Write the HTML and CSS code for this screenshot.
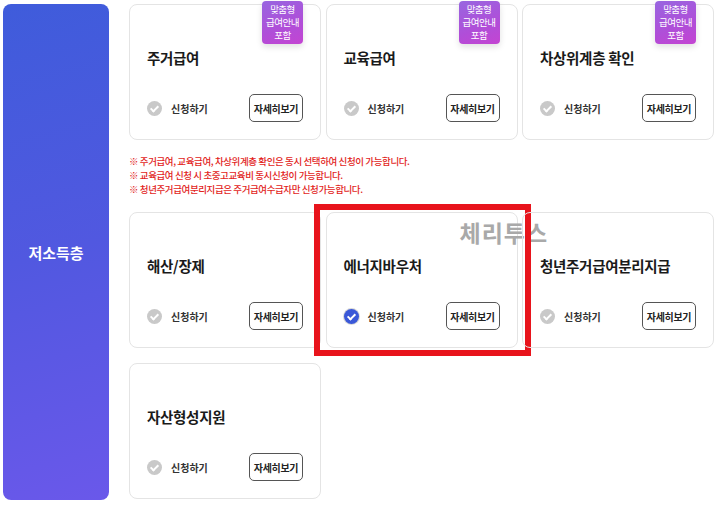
FILE: index.html
```html
<!DOCTYPE html>
<html>
<head>
    <title>저소득층 급여 신청</title>
    <link rel="stylesheet" href="styles.css">
</head>
<body>
    <div class="page">
        <div class="side">저소득층</div>
        <div class="main">
            <div class="card-grid">
                <div class="card">
                    <span class="badge">맞춤형<br>급여안내<br>포함</span>
                    <h3 class="card-title">주거급여</h3>
                    <div class="card-foot">
                        <label class="apply"><span class="check"></span>신청하기</label>
                        <button class="more">자세히보기</button>
                    </div>
                </div>
                <div class="card">
                    <span class="badge">맞춤형<br>급여안내<br>포함</span>
                    <h3 class="card-title">교육급여</h3>
                    <div class="card-foot">
                        <label class="apply"><span class="check"></span>신청하기</label>
                        <button class="more">자세히보기</button>
                    </div>
                </div>
                <div class="card">
                    <span class="badge">맞춤형<br>급여안내<br>포함</span>
                    <h3 class="card-title">차상위계층 확인</h3>
                    <div class="card-foot">
                        <label class="apply"><span class="check"></span>신청하기</label>
                        <button class="more">자세히보기</button>
                    </div>
                </div>
            </div>

            <div class="notes">
                <p>※ 주거급여, 교육급여, 차상위계층 확인은 동시 선택하여 신청이 가능합니다.</p>
                <p>※ 교육급여 신청 시 초중고교육비 동시신청이 가능합니다.</p>
                <p>※ 청년주거급여분리지급은 주거급여수급자만 신청가능합니다.</p>
            </div>

            <div class="card-grid">
                <div class="card">
                    <h3 class="card-title">해산/장제</h3>
                    <div class="card-foot">
                        <label class="apply"><span class="check"></span>신청하기</label>
                        <button class="more">자세히보기</button>
                    </div>
                </div>
                <div class="card">
                    <span class="watermark">체리투스</span>
                    <span class="highlight"></span>
                    <h3 class="card-title">에너지바우처</h3>
                    <div class="card-foot">
                        <label class="apply"><span class="check checked"></span>신청하기</label>
                        <button class="more">자세히보기</button>
                    </div>
                </div>
                <div class="card">
                    <h3 class="card-title">청년주거급여분리지급</h3>
                    <div class="card-foot">
                        <label class="apply"><span class="check"></span>신청하기</label>
                        <button class="more">자세히보기</button>
                    </div>
                </div>
                <div class="card">
                    <h3 class="card-title">자산형성지원</h3>
                    <div class="card-foot">
                        <label class="apply"><span class="check"></span>신청하기</label>
                        <button class="more">자세히보기</button>
                    </div>
                </div>
            </div>
        </div>
    </div>
</body>
</html>
```

FILE: styles.css
```css
body {
    margin: 0;
    font-family: "Noto Sans CJK KR", "Noto Sans", sans-serif;
    background-color: #ffffff;
    color: #222;
}

.page {
    display: flex;
    gap: 20px;
    padding: 4px 0 0 3px;
}

.side {
    width: 106px;
    height: 496px;
    border-radius: 8px;
    background: linear-gradient(165deg, #3f5cdb 0%, #5158e0 50%, #6a58ea 100%);
    color: #fff;
    font-size: 15px;
    font-weight: 700;
    display: flex;
    align-items: center;
    justify-content: center;
}

.main {
    width: 585px;
    display: flex;
    flex-direction: column;
}

.card-grid {
    display: grid;
    grid-template-columns: repeat(3, 1fr);
    column-gap: 4.5px;
    row-gap: 15px;
}

.card {
    position: relative;
    height: 136px;
    box-sizing: border-box;
    border: 1px solid #e4e4e4;
    border-radius: 8px;
    padding: 0 17px;
    display: flex;
    flex-direction: column;
}

.card-title {
    margin: 41px 0 0;
    font-size: 14.5px;
    font-weight: 700;
    line-height: 24px;
    color: #1a1a1a;
    letter-spacing: -0.3px;
}

.card-foot {
    margin-top: auto;
    margin-bottom: 17px;
    display: flex;
    align-items: center;
    justify-content: space-between;
}

.apply {
    display: flex;
    align-items: center;
    gap: 9px;
    font-size: 10px;
    font-weight: 700;
    color: #333;
}

.check {
    width: 15px;
    height: 15px;
    border-radius: 50%;
    background-color: #c9c9c9;
    position: relative;
}

.check::after {
    content: "";
    position: absolute;
    left: 5px;
    top: 3px;
    width: 3px;
    height: 6px;
    border: solid #fff;
    border-width: 0 2px 2px 0;
    transform: rotate(45deg);
}

.check.checked {
    background-color: #3a58d8;
    box-shadow: 0 0 0 1px #d8d8d8;
}

.more {
    width: 54px;
    height: 28px;
    padding: 0;
    border: 1.5px solid #555;
    border-radius: 5px;
    background-color: #fff;
    font-family: inherit;
    font-size: 10px;
    font-weight: 600;
    color: #222;
    letter-spacing: -0.3px;
}

.badge {
    position: absolute;
    top: -4px;
    right: 17px;
    width: 41px;
    height: 43px;
    border-radius: 4px;
    background: linear-gradient(160deg, #9866e0 0%, #b04ed8 60%, #c444d2 100%);
    box-shadow: 0 3px 6px rgba(0, 0, 0, 0.12);
    color: #fff;
    font-size: 9.5px;
    line-height: 13px;
    text-align: center;
    display: flex;
    align-items: center;
    justify-content: center;
    letter-spacing: -0.5px;
}

.notes {
    margin: 14px 0 16px;
    color: #e2241c;
    font-size: 9.5px;
    font-weight: 500;
    line-height: 14px;
    letter-spacing: -0.4px;
}

.notes p {
    margin: 0;
}

.watermark {
    position: absolute;
    left: 133px;
    top: 2px;
    font-size: 23px;
    font-weight: 700;
    color: #a9a9a9;
    white-space: nowrap;
    letter-spacing: 1px;
}

.highlight {
    position: absolute;
    left: -13px;
    right: -14px;
    top: -9px;
    bottom: -9px;
    border: 6px solid #e8141c;
    pointer-events: none;
}
```
